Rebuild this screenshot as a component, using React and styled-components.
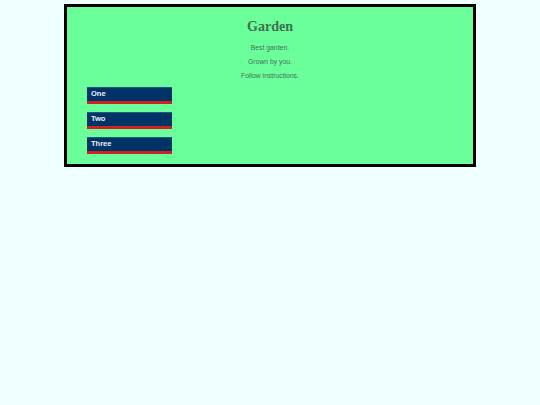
import React from 'react';
import styled, { createGlobalStyle } from 'styled-components';

const items = ['One', 'Two', 'Three'];

export default function App() {
    return (
        <>
            <GlobalStyle />
            <Garden>
                <Title>Garden</Title>
                <Line>Best garden.</Line>
                <Line>Grown by you.</Line>
                <Line>Follow instructions.</Line>
                <Steps>
                    {items.map((item) => (
                        <Step key={item}>{item}</Step>
                    ))}
                </Steps>
            </Garden>
        </>
    );
}

const GlobalStyle = createGlobalStyle`
    html, body {
        margin: 0;
        background-color: #f0ffff;
    }

    body {
        padding-top: 4px;
        font-family: "Liberation Sans", Arial, sans-serif;
    }
`;

const Garden = styled.main`
    width: 412px;
    margin: 0 auto;
    border: 3px solid #000;
    background-color: #6bff9b;
    padding: 11px 20px 10px 20px;
    box-sizing: border-box;
    display: flex;
    flex-direction: column;
`;

const Title = styled.h1`
    margin: 0 0 6px 0;
    font-family: "Liberation Serif", "Times New Roman", serif;
    font-size: 14px;
    line-height: 17px;
    font-weight: bold;
    text-align: center;
    color: #3f6f4f;
`;

const Line = styled.p`
    margin: 0;
    font-size: 6.8px;
    line-height: 14px;
    text-align: center;
    color: #46705a;
`;

const Steps = styled.div`
    display: flex;
    flex-direction: column;
    gap: 8px;
    margin-top: 4px;
`;

const Step = styled.div`
    width: 85px;
    height: 17px;
    box-sizing: border-box;
    padding: 0 4px 3px 4px;
    display: flex;
    align-items: center;
    background-color: #003366;
    border-top: 1px solid #1a5a7a;
    border-bottom: 3px solid #cc2222;
    color: #eef4ff;
    font-size: 7.5px;
    font-weight: bold;
`;
